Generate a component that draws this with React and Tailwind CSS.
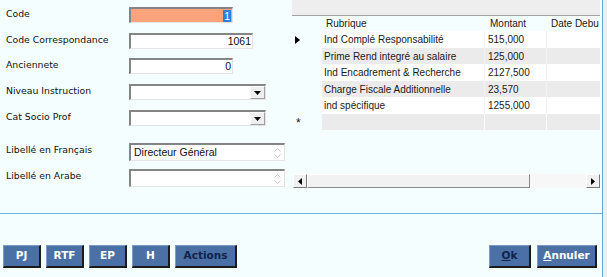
import React from 'react';

const rows = [
  { rubrique: 'Ind Complé Responsabilité', montant: '515,000' },
  { rubrique: 'Prime Rend integré au salaire', montant: '125,000' },
  { rubrique: 'Ind Encadrement & Recherche', montant: '2127,500' },
  { rubrique: 'Charge Fiscale Additionnelle', montant: '23,570' },
  { rubrique: 'ind spécifique', montant: '1255,000' },
];

const label = "w-[123px] shrink-0 text-[9.3px] leading-[13px] text-[#111] font-['DejaVu_Sans',sans-serif]";
const boxBorder = 'border-t-2 border-l-2 border-[#858585] border-r-[#e4e4e4] border-b-[#e4e4e4] border-r border-b';

const TextBox = ({ width, value, bg = 'bg-white', selected }) => (
  <div className={`${width} h-[16px] ${bg} ${boxBorder} flex items-center justify-end pr-[1px] text-[10.5px] text-[#111] font-['Liberation_Sans',sans-serif]`}>
    {selected ? <span className="bg-[#2f7fe0] text-white px-[1px] leading-[12px]">{value}</span> : value}
  </div>
);

const Select = () => (
  <div className={`w-[137px] h-[16px] bg-white ${boxBorder} flex justify-end`}>
    <div className="w-[15px] h-full bg-[#efefef] border border-[#a0a0a0] border-t-white border-l-white flex items-center justify-center">
      <svg width="7" height="4" viewBox="0 0 7 4"><path d="M0 0h7L3.5 4z" fill="#000" /></svg>
    </div>
  </div>
);

const TextArea = ({ value }) => (
  <div className={`w-[156px] h-[18px] bg-white ${boxBorder} flex items-start justify-between pl-[3px] text-[10.5px] leading-[14px] text-[#111] font-['Liberation_Sans',sans-serif]`}>
    <span>{value}</span>
    <div className="w-[12px] h-full flex flex-col items-center justify-center gap-[2px] mr-[1px]">
      <svg width="7" height="4" viewBox="0 0 7 4"><path d="M0.5 3.5L3.5 0.5L6.5 3.5" fill="none" stroke="#c8c8c8" /></svg>
      <svg width="7" height="4" viewBox="0 0 7 4"><path d="M0.5 0.5L3.5 3.5L6.5 0.5" fill="none" stroke="#c8c8c8" /></svg>
    </div>
  </div>
);

const Btn = ({ children, width, dark }) => (
  <button
    className={`${width} h-[23px] bg-[#4a70a6] border-t border-l border-[#7d9bc8] border-r-2 border-b-2 border-r-[#1b1b1b] border-b-[#1b1b1b] text-[10.5px] font-bold font-['DejaVu_Sans',sans-serif] ${dark ? 'text-[#12234a]' : 'text-white'} flex items-center justify-center`}
  >
    {children}
  </button>
);

export default function App() {
  return (
    <div className="w-[607px] h-[277px] flex bg-[#f4fefe] overflow-hidden">
      <div className="w-[603px] shrink-0 flex flex-col border-r border-[#62a8e0]">
        {/* top section */}
        <div className="h-[214px] shrink-0 flex border-b border-[#6ab6ec]">
          {/* form */}
          <div className="w-[292px] shrink-0 pl-[6px] pt-[7px] flex flex-col">
            <div className="flex items-start">
              <span className={label}>Code</span>
              <TextBox width="w-[104px]" value="1" bg="bg-[#fba37c]" selected />
            </div>
            <div className="flex items-start mt-[10px]">
              <span className={label}>Code Correspondance</span>
              <TextBox width="w-[124px]" value="1061" />
            </div>
            <div className="flex items-start mt-[9px]">
              <span className={label}>Anciennete</span>
              <TextBox width="w-[104px]" value="0" />
            </div>
            <div className="flex items-start mt-[10px]">
              <span className={label}>Niveau Instruction</span>
              <Select />
            </div>
            <div className="flex items-start mt-[10px]">
              <span className={label}>Cat Socio Prof</span>
              <Select />
            </div>
            <div className="flex items-start mt-[17px]">
              <span className={label}>Libellé en Français</span>
              <TextArea value="Directeur Général" />
            </div>
            <div className="flex items-start mt-[8px]">
              <span className={label}>Libellé en Arabe</span>
              <TextArea value="" />
            </div>
          </div>

          {/* grid */}
          <div className="w-[308px] shrink-0 flex flex-col text-[10px] text-[#1a1a1a] font-['Liberation_Sans',sans-serif]">
            <div className="h-[16px] bg-[#eeeeee] border-b border-[#a4a4a4]" />
            <div className="h-[15px] flex items-center">
              <div className="w-[30px]" />
              <div className="w-[163px] pl-[4px]">Rubrique</div>
              <div className="w-[62px] pl-[5px]">Montant</div>
              <div className="w-[53px] pl-[4px] whitespace-nowrap overflow-hidden">Date Debu</div>
            </div>
            {rows.map((row, i) => (
              <div key={i} className={`${i % 2 === 0 ? 'h-[17px]' : 'h-[16px]'} flex`}>
                <div className="w-[30px] flex items-center pl-[3px]">
                  {i === 0 && (
                    <svg width="5" height="8" viewBox="0 0 5 8"><path d="M0 0L5 4L0 8z" fill="#000" /></svg>
                  )}
                </div>
                <div className={`flex flex-1 ${i % 2 === 0 ? 'bg-white' : 'bg-[#ebebeb]'}`}>
                  <div className="w-[163px] pl-[2px] flex items-center border-r border-[#f2f2f2] whitespace-nowrap">{row.rubrique}</div>
                  <div className="w-[62px] pl-[3px] flex items-center border-r border-[#f2f2f2]">{row.montant}</div>
                  <div className="flex-1" />
                </div>
              </div>
            ))}
            <div className="h-[16px] flex">
              <div className="w-[30px] flex items-center pl-[4px] text-[12px] leading-none pt-[2px]">*</div>
              <div className="flex flex-1 bg-[#ebebeb]">
                <div className="w-[163px] border-r border-white" />
                <div className="w-[62px] border-r border-white" />
                <div className="flex-1" />
              </div>
            </div>

            {/* horizontal scrollbar */}
            <div className="mt-[44px] ml-[1px] h-[14px] w-[307px] flex bg-[#f7f7f7]">
              <div className="w-[14px] h-full bg-[#f0f0f0] border border-[#ffffff] border-r-[#7a7a7a] border-b-[#7a7a7a] flex items-center justify-center">
                <svg width="4" height="7" viewBox="0 0 4 7"><path d="M4 0L0 3.5L4 7z" fill="#000" /></svg>
              </div>
              <div className="w-[223px] h-full bg-[#f2f2f2] border border-white border-r-[#8a8a8a] border-b-[#8a8a8a]" />
              <div className="flex-1" />
              <div className="w-[14px] h-full bg-[#f0f0f0] border border-[#ffffff] border-r-[#7a7a7a] border-b-[#7a7a7a] flex items-center justify-center">
                <svg width="4" height="7" viewBox="0 0 4 7"><path d="M0 0L4 3.5L0 7z" fill="#000" /></svg>
              </div>
            </div>
          </div>
        </div>

        {/* buttons */}
        <div className="flex-1 flex items-start justify-between pl-[3px] pr-[5px] pt-[31px]">
          <div className="flex gap-[5px]">
            <Btn width="w-[38px]">PJ</Btn>
            <Btn width="w-[38px]">RTF</Btn>
            <Btn width="w-[38px]">EP</Btn>
            <Btn width="w-[38px]">H</Btn>
            <Btn width="w-[62px]" dark>Actions</Btn>
          </div>
          <div className="flex gap-[6px]">
            <Btn width="w-[42px]" dark><span className="underline">O</span>k</Btn>
            <Btn width="w-[60px]"><span className="underline">A</span>nnuler</Btn>
          </div>
        </div>
      </div>
      <div className="flex-1 bg-[#eaf0f0]" />
    </div>
  );
}
